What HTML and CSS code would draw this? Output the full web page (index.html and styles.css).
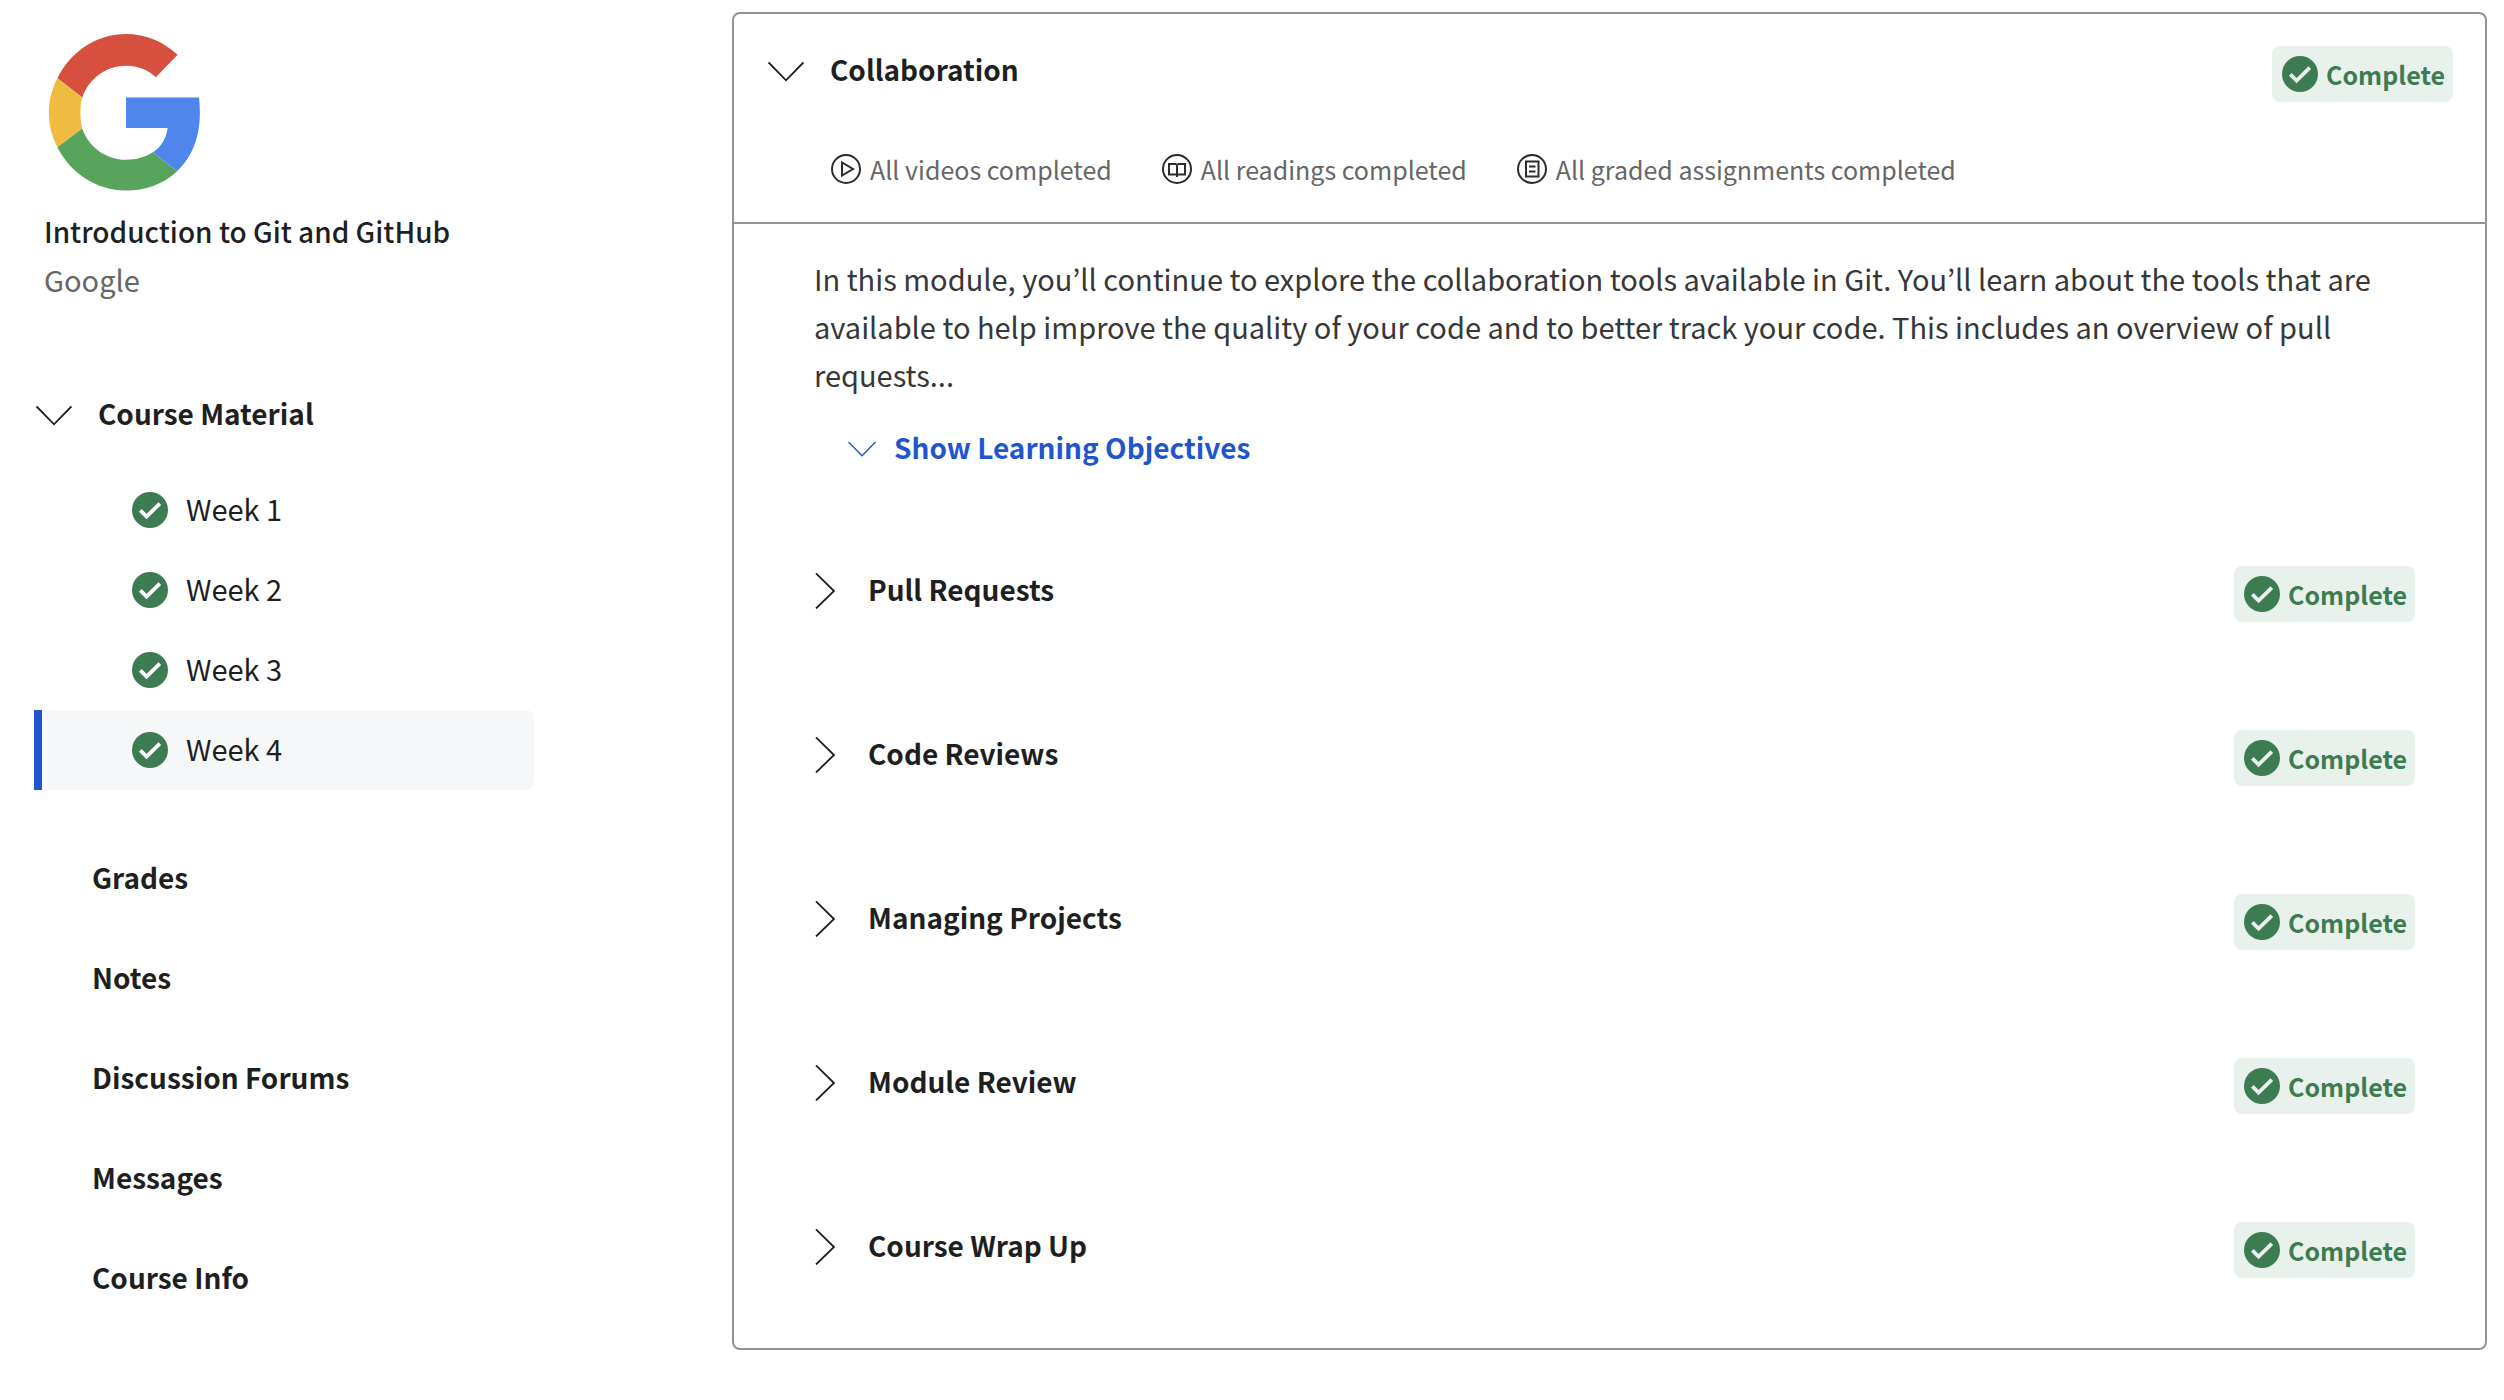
FILE: index.html
```html
<!DOCTYPE html>
<html lang="en">
<head>
<meta charset="utf-8">
<meta name="viewport" content="width=device-width, initial-scale=1">
<title>Introduction to Git and GitHub</title>
<link rel="stylesheet" href="styles.css">
</head>
<body>
<svg class="sprite" aria-hidden="true">
  <symbol id="check" viewBox="0 0 36 36"><circle cx="18" cy="18" r="18" fill="#3d7b52"/><path d="M8.3 18.300l6.300 6.200L27.800 11.600" fill="none" stroke="currentColor" stroke-width="3.800"/></symbol>
  <symbol id="down" viewBox="0 0 36 36"><path d="M.6 11.500L18 29.300 35.400 11.500" fill="none" stroke="currentColor" stroke-width="1.800"/></symbol>
  <symbol id="right" viewBox="0 0 36 40"><path d="M2 4.300L20 22 2 39.500" fill="none" stroke="currentColor" stroke-width="1.800"/></symbol>
</svg>
<div class="page">
  <aside class="sidebar">
    <header class="course">
      <svg class="logo" viewBox="0 0 154 158" role="img" aria-label="Google">
        <path fill="#d64f3f" d="M130 21L108 43.500C100 36 90 32 78 32C58 32 40.500 45 34 64L9 44.500C22 18 48 0 78 0C98 0 116 8 130 21z"/>
        <path fill="#efbb41" d="M9 44.500L34 64C31.500 72 31.500 87 34 95L9 114C-2.500 92 -2.500 66 9 44.500z"/>
        <path fill="#59a45d" d="M9 114L34 95C40.500 114 58 126.500 78 126.500C88 126.500 97.500 124 105 119L129.500 138C115 151.500 97 157.500 78 157.500C48 157.500 22 140 9 114z"/>
        <path fill="#5086ec" d="M78 64H151.500C154.500 92 150 119 129.500 138L105 119C113 114 118.500 105 120 94.500H78z"/>
      </svg>
      <div class="course-title">Introduction to Git and GitHub</div>
      <div class="partner">Google</div>
    </header>
    <nav>
      <button class="toggle" aria-expanded="true"><svg class="icon"><use href="#down"/></svg>Course Material</button>
      <ul class="weeks">
        <li><a href="#week1"><svg class="icon check"><use href="#check"/></svg>Week 1</a></li>
        <li><a href="#week2"><svg class="icon check"><use href="#check"/></svg>Week 2</a></li>
        <li><a href="#week3"><svg class="icon check"><use href="#check"/></svg>Week 3</a></li>
        <li><a class="current" aria-current="page" href="#week4"><svg class="icon check"><use href="#check"/></svg>Week 4</a></li>
      </ul>
      <ul class="links">
        <li><a href="#grades">Grades</a></li>
        <li><a href="#notes">Notes</a></li>
        <li><a href="#forums">Discussion Forums</a></li>
        <li><a href="#messages">Messages</a></li>
        <li><a href="#info">Course Info</a></li>
      </ul>
    </nav>
  </aside>
  <main class="card">
    <header class="card-head">
      <div class="row">
        <button class="toggle head-toggle" aria-expanded="true"><svg class="icon"><use href="#down"/></svg>Collaboration</button>
        <span class="badge"><svg class="icon"><use href="#check"/></svg>Complete</span>
      </div>
      <ul class="progress">
        <li><svg class="small" viewBox="0 0 30 30"><circle cx="15" cy="15" r="14"/><path d="M11 8.500v13l11-6.500z"/></svg>All videos completed</li>
        <li><svg class="small" viewBox="0 0 30 30"><circle cx="15" cy="15" r="14"/><path d="M7 10h6.500l1.500 1 1.500-1H23v10.500H7zM15 10.500v12.500"/></svg>All readings completed</li>
        <li><svg class="small" viewBox="0 0 30 30"><circle cx="15" cy="15" r="14"/><path d="M9 7.500h12.500v15H9zM12 12.500h6.500M12 17.500h6.500"/></svg>All graded assignments completed</li>
      </ul>
    </header>
    <div class="card-body">
      <p>In this module, you’ll continue to explore the collaboration tools available in Git. You’ll learn about the tools that are available to help improve the quality of your code and to better track your code. This includes an overview of pull requests...</p>
      <button class="toggle objectives" aria-expanded="false"><svg class="icon"><use href="#down"/></svg>Show Learning Objectives</button>
      <div class="lessons">
        <div class="row"><button class="toggle" aria-expanded="false"><svg class="icon"><use href="#right"/></svg>Pull Requests</button><span class="badge"><svg class="icon"><use href="#check"/></svg>Complete</span></div>
        <div class="row"><button class="toggle" aria-expanded="false"><svg class="icon"><use href="#right"/></svg>Code Reviews</button><span class="badge"><svg class="icon"><use href="#check"/></svg>Complete</span></div>
        <div class="row"><button class="toggle" aria-expanded="false"><svg class="icon"><use href="#right"/></svg>Managing Projects</button><span class="badge"><svg class="icon"><use href="#check"/></svg>Complete</span></div>
        <div class="row"><button class="toggle" aria-expanded="false"><svg class="icon"><use href="#right"/></svg>Module Review</button><span class="badge"><svg class="icon"><use href="#check"/></svg>Complete</span></div>
        <div class="row"><button class="toggle" aria-expanded="false"><svg class="icon"><use href="#right"/></svg>Course Wrap Up</button><span class="badge"><svg class="icon"><use href="#check"/></svg>Complete</span></div>
      </div>
    </div>
  </main>
</div>
</body>
</html>
```
FILE: styles.css
```css
* { box-sizing: border-box; }

body {
  margin: 0;
  background: #fff;
  color: #1f1f1f;
  font: 400 29px/48px "Noto Sans CJK KR", "Noto Sans", sans-serif;
}

ul { list-style: none; margin: 0; padding: 0; }
a { color: inherit; text-decoration: none; }
.sprite { display: none; }
.icon { width: 36px; height: 36px; flex: none; }

.page {
  display: grid;
  grid-template-columns: 500px minmax(0, 1fr);
  column-gap: 198px;
  align-items: start;
  padding: 12px 17px 50px 34px;
}

/* Sidebar */
.course { padding: 22px 0 0 10px; }
.logo { display: block; width: 154px; height: 157px; margin: 0 0 16px 4px; }
.course-title { font-size: 28px; font-weight: 500; }
.partner { color: #666; }

.toggle {
  display: flex;
  align-items: center;
  gap: 18px;
  padding: 0;
  border: 0;
  background: none;
  color: inherit;
  font: inherit;
  font-size: 28px;
  font-weight: 700;
  text-align: left;
  cursor: pointer;
}
nav .toggle { gap: 26px; margin: 86px 0 33px 2px; }

.weeks a {
  display: flex;
  align-items: flex-start;
  gap: 18px;
  height: 80px;
  padding: 14px 0 0 90px;
  border-left: 8px solid transparent;
  border-radius: 0 8px 8px 0;
}
.weeks .current { background: #f5f7f9; border-left-color: #1f56cd; }
.check { margin-top: 8px; color: #fff; }

.links { padding: 37px 0 0 58px; font-size: 28px; font-weight: 700; }
.links a { display: block; padding: 26px 0; }

/* Module card */
.card { border: 2px solid #929299; border-radius: 8px; }
.card-head { padding: 31px 32px 33px 34px; border-bottom: 2px solid #929299; }
.row { display: flex; align-items: flex-start; justify-content: space-between; }
.head-toggle { gap: 26px; }

.badge {
  display: flex;
  align-items: center;
  gap: 8px;
  height: 56px;
  margin-top: 1px;
  padding: 0 8px 0 10px;
  border-radius: 8px;
  background: #e8f1ec;
  color: #3d7b52;
  font-size: 25px;
  font-weight: 700;
}
.badge .icon { color: #e8f1ec; }

.progress {
  display: flex;
  gap: 50px;
  margin-top: 47px;
  padding-left: 63px;
  color: #666;
  font-size: 25px;
  line-height: 40px;
}
.progress li { display: flex; align-items: center; gap: 9px; }
.small { width: 30px; height: 30px; fill: none; stroke: #2b2b2b; stroke-width: 2; }

.card-body { padding: 30px 70px 70px 80px; }
.card-body p { margin: 0 0 25px; color: #373737; }
.objectives { margin-left: 34px; color: #1f56cd; }
.objectives .icon { width: 28px; height: 28px; }

.lessons { display: grid; gap: 107px; margin-top: 94px; }
.lessons .toggle .icon { height: 40px; }
```
